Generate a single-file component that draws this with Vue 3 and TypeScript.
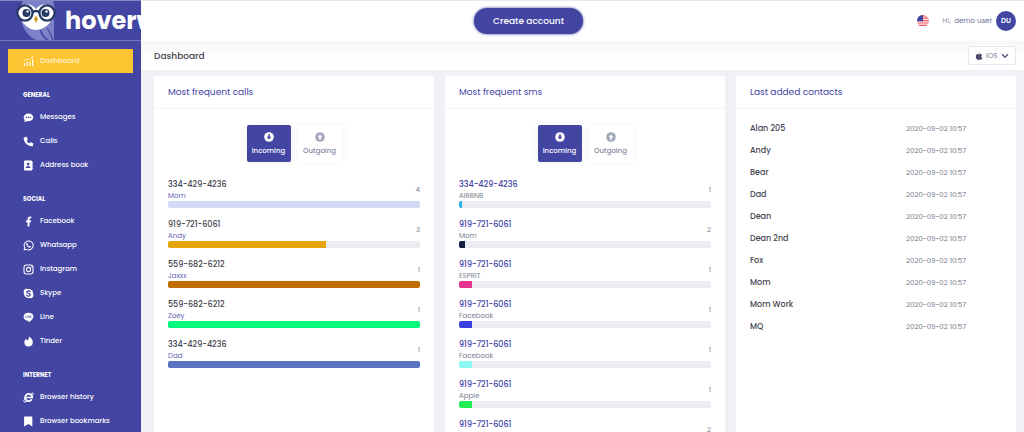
<script setup lang="ts">
import { ref } from 'vue'

interface NavItem { label: string; icon: string }
interface NavGroup { title: string; items: NavItem[] }
interface Entry { phone: string; name: string; count: number; share: number; color: string }
interface Panel { id: string; title: string; entries: Entry[] }

const groups: NavGroup[] = [
  {
    title: 'GENERAL',
    items: [
      { label: 'Messages', icon: 'messages' },
      { label: 'Calls', icon: 'calls' },
      { label: 'Address book', icon: 'address' },
    ],
  },
  {
    title: 'SOCIAL',
    items: [
      { label: 'Facebook', icon: 'facebook' },
      { label: 'Whatsapp', icon: 'whatsapp' },
      { label: 'Instagram', icon: 'instagram' },
      { label: 'Skype', icon: 'skype' },
      { label: 'Line', icon: 'line' },
      { label: 'Tinder', icon: 'tinder' },
    ],
  },
  {
    title: 'INTERNET',
    items: [
      { label: 'Browser history', icon: 'history' },
      { label: 'Browser bookmarks', icon: 'bookmark' },
    ],
  },
]

const panels: Panel[] = [
  {
    id: 'calls',
    title: 'Most frequent calls',
    entries: [
      { phone: '334-429-4236', name: 'Mom', count: 4, share: 100, color: '#d3daf5' },
      { phone: '919-721-6061', name: 'Andy', count: 3, share: 62.5, color: '#e5a50a' },
      { phone: '559-682-6212', name: 'Jaxxx', count: 1, share: 100, color: '#bf6c00' },
      { phone: '559-682-6212', name: 'Zoey', count: 1, share: 100, color: '#00f97c' },
      { phone: '334-429-4236', name: 'Dad', count: 1, share: 100, color: '#5b74c2' },
    ],
  },
  {
    id: 'sms',
    title: 'Most frequent sms',
    entries: [
      { phone: '334-429-4236', name: 'AIRBNB', count: 1, share: 1.3, color: '#2fb0ee' },
      { phone: '919-721-6061', name: 'Mom', count: 2, share: 2.4, color: '#10203f' },
      { phone: '919-721-6061', name: 'ESPRIT', count: 1, share: 5, color: '#e6348f' },
      { phone: '919-721-6061', name: 'Facebook', count: 1, share: 5, color: '#3d40e0' },
      { phone: '919-721-6061', name: 'Facebook', count: 1, share: 5, color: '#8bfaf3' },
      { phone: '919-721-6061', name: 'Apple', count: 1, share: 5, color: '#20ee57' },
      { phone: '919-721-6061', name: 'Apple', count: 2, share: 5, color: '#2fb0ee' },
    ],
  },
]

const contacts: string[] = ['Alan 205', 'Andy', 'Bear', 'Dad', 'Dean', 'Dean 2nd', 'Fox', 'Mom', 'Mom Work', 'MQ']
const added = '2020-09-02 10:57'

const direction = ref<Record<string, 'in' | 'out'>>({ calls: 'in', sms: 'in' })
const platform = ref('iOS')
</script>

<template>
  <div class="shell">
    <aside class="sidebar">
      <a class="brand" href="#" aria-label="hoverwatch">
        <svg class="owl" viewBox="0 0 44 41" aria-hidden="true">
          <path d="M7 0H37C39 8 39 14 38 20V41H22C12 37 6 28 5 18C4 11 5 5 7 0Z" fill="#7d82c8" />
          <path d="M24 29C25 33 28 38 33 41" fill="none" stroke="#4345a3" stroke-width="1.6" />
          <path d="M31 28C34 32 36 36 37 41" fill="none" stroke="#4345a3" stroke-width="1.2" />
          <path d="M3 8C10 2 17 5 20 9C23 5 30 2 37 8C40 19 30 30 20 30C11 30 1 19 3 8Z" fill="#fff" />
          <circle cx="9" cy="13" r="7.6" fill="#fff" stroke="#263a66" stroke-width="2.2" />
          <circle cx="31" cy="13" r="7.6" fill="#fff" stroke="#263a66" stroke-width="2.2" />
          <path d="M16 12.500Q20 9.500 24 12.500" fill="none" stroke="#263a66" stroke-width="2.400" />
          <circle cx="10.500" cy="13" r="4" fill="#263a66" />
          <circle cx="29.500" cy="13" r="4" fill="#263a66" />
          <circle cx="11.500" cy="11.500" r="1.200" fill="#fff" />
          <circle cx="30.500" cy="11.500" r="1.200" fill="#fff" />
          <path d="M20 15.500L22 19L20 23L18 19Z" fill="#cf9e25" />
        </svg>
        <span class="wordmark">hoverwatch</span>
      </a>
      <nav class="nav" aria-label="Main">
        <a class="item active" href="#">
          <svg class="icon" viewBox="0 0 12 12" fill="none" stroke="#fff" aria-hidden="true">
            <path d="M1.500 11V8M4.500 11V6.500M7.500 11V6M10.500 11V3.500" stroke-width="1.300" />
            <path d="M1 5.500L4 3.500L7 4L10.500 1" stroke-width=".8" />
            <circle cx="10.500" cy="1.300" r=".6" stroke-width=".6" />
          </svg>
          Dashboard
        </a>
        <section v-for="group in groups" :key="group.title">
          <h2 class="group">{{ group.title }}</h2>
          <a v-for="item in group.items" :key="item.label" class="item" href="#">
            <svg class="icon" viewBox="0 0 12 12" fill="#fff" aria-hidden="true">
              <template v-if="item.icon === 'messages'">
                <path d="M6 1.500C9 1.500 11.300 3.400 11.300 5.800S9 10 6 10C5.300 10 4.600 9.900 4 9.700C3.300 10.200 2.200 10.700 1 10.700C1.600 10 1.900 9.200 2 8.600C1.200 7.900 .7 6.900 .7 5.800C.7 3.400 3 1.500 6 1.500Z" />
                <path d="M2.800 5.800H9.200" fill="none" stroke="#4345a3" stroke-width="1.300" stroke-dasharray="1.500 .8" />
              </template>
              <path v-else-if="item.icon === 'calls'" d="M1.200 1.500L3.400 .8Q3.900 .7 4.100 1.200L5.200 3.600Q5.300 4 5 4.300L3.900 5.200Q4.900 7.200 6.900 8.200L7.800 7Q8.100 6.700 8.500 6.900L10.900 8Q11.300 8.200 11.200 8.600L10.700 10.800Q10.600 11.300 10 11.300C4.900 11.300 .7 7.100 .7 2Q.7 1.600 1.200 1.500Z" />
              <template v-else-if="item.icon === 'address'">
                <path d="M2.200 .5H9Q10 .5 10 1.500V10.500Q10 11.500 9 11.500H2.200Q1.200 11.500 1.200 10.500V1.500Q1.200 .5 2.200 .5ZM10.300 2H11V4H10.300ZM10.300 5H11V7H10.300ZM10.300 8H11V10H10.300Z" />
                <circle cx="5.600" cy="4.400" r="1.500" fill="#4345a3" />
                <path d="M2.900 8.700Q3 6.500 5.600 6.500T8.300 8.700Z" fill="#4345a3" />
              </template>
              <path v-else-if="item.icon === 'facebook'" d="M5 11.500V6.800H3.200V4.800H5V3.500C5 1.700 6 .6 7.700 .6L9.100 .7V2.400H8.100C7.300 2.400 7.100 2.900 7.100 3.500V4.800H9L8.700 6.800H7.100V11.500Z" />
              <template v-else-if="item.icon === 'whatsapp'">
                <path d="M1.200 10.900L1.900 8.300A4.900 4.900 0 1 1 3.800 10.200Z" fill="none" stroke="#fff" stroke-width="1.100" stroke-linejoin="round" />
                <path d="M3.900 3.500L4.800 3.300L5.400 4.700L4.900 5.400Q5.500 6.500 6.700 7L7.300 6.300L8.700 7L8.500 8Q7.700 8.800 6.500 8.300Q4.300 7.400 3.600 5.300Q3.300 4.200 3.900 3.500Z" />
              </template>
              <template v-else-if="item.icon === 'instagram'">
                <rect x="1.100" y="1.100" width="9.800" height="9.800" rx="2.700" fill="none" stroke="#fff" stroke-width="1.200" />
                <circle cx="6" cy="6" r="2.300" fill="none" stroke="#fff" stroke-width="1.200" />
                <circle cx="8.900" cy="3.100" r=".7" />
              </template>
              <template v-else-if="item.icon === 'skype'">
                <circle cx="4" cy="4" r="3.300" /><circle cx="8" cy="8" r="3.300" /><circle cx="6" cy="6" r="5" />
                <path d="M8 4.200Q7.400 3.100 5.900 3.100Q4.100 3.200 4.100 4.500Q4.200 5.500 6 5.900T7.900 7.500Q7.800 8.900 6 8.900Q4.400 8.900 3.900 7.600" fill="none" stroke="#4345a3" stroke-width="1.200" stroke-linecap="round" />
              </template>
              <template v-else-if="item.icon === 'line'">
                <path d="M6 .9C9 .9 11.400 2.700 11.400 5.200C11.400 7.600 8.600 9.600 6 11.500C6.100 10.700 6.200 9.800 5.600 9.600C2.700 9.400 .6 7.600 .6 5.200C.6 2.700 3 .9 6 .9Z" />
                <path d="M2.700 4V6.300H4M4.800 4V6.400M5.700 6.400V4.200L7.100 6.200V4M9.200 4.200H8V6.200H9.200M8 5.200H9.100" fill="none" stroke="#4345a3" stroke-width=".5" />
              </template>
              <path v-else-if="item.icon === 'tinder'" d="M6.300 .6C9 2 10.800 4.300 10.700 7C10.600 9.700 8.600 11.400 6.100 11.400C3.400 11.400 1.500 9.600 1.500 7C1.500 5.200 2.300 3.700 3.700 2.900C3.600 3.900 3.900 4.600 4.500 4.900C6 4 6.700 2.500 6.300 .6Z" />
              <template v-else-if="item.icon === 'history'">
                <path d="M9.600 7.900A3.900 3.900 0 1 1 10.100 6H3.600" fill="none" stroke="#fff" stroke-width="1.900" />
                <path d="M9 1.600Q11.500 .3 11.200 2.300Q11 3 10.600 3.700M2.200 6.500Q.2 9.900 1.200 10.900Q2.200 11.400 4.500 10" fill="none" stroke="#fff" stroke-width="1" />
              </template>
              <path v-else d="M1.800 .5H9.600Q10.200 .5 10.200 1.100V11.500L6 8.800L1.200 11.500V1.100Q1.200 .5 1.800 .5Z" />
            </svg>
            {{ item.label }}
          </a>
        </section>
      </nav>
    </aside>

    <div class="main">
      <header class="topbar">
        <button class="create" type="button">Create account</button>
        <div class="account">
          <button class="flag" type="button" aria-label="English">
            <svg viewBox="0 0 12 12" aria-hidden="true">
              <defs><clipPath id="round"><circle cx="6" cy="6" r="6" /></clipPath></defs>
              <g clip-path="url(#round)">
                <rect width="12" height="12" fill="#fbe3e5" />
                <path d="M0 .8H12M0 3.200H12M0 5.600H12M0 8H12M0 10.400H12" stroke="#f0626c" stroke-width="1.200" />
                <rect width="6" height="6.200" fill="#3f419c" />
              </g>
            </svg>
          </button>
          <button class="user" type="button">
            <span class="hi">Hi,</span>
            <span class="who">demo user</span>
            <span class="avatar">DU</span>
          </button>
        </div>
      </header>

      <div class="subheader">
        <h1>Dashboard</h1>
        <label class="platform">
          <svg class="apple" viewBox="0 0 10 10" aria-hidden="true">
            <path d="M6.600 .3Q6.600 2 5 2.400Q5 .9 6.600 .3ZM8.900 3.600Q7.700 4.300 7.800 5.700Q7.900 7.100 9.200 7.600Q8.300 9.800 7.200 9.800Q6.600 9.800 6.100 9.600Q5.300 9.300 4.600 9.600Q3.900 9.900 3.500 9.900C2.400 9.800 1 7.700 1 5.600C1 3.700 2.200 2.600 3.400 2.600Q4 2.600 4.600 2.900Q5.100 3.100 5.700 2.800C6.800 2.400 8.100 2.500 8.900 3.600Z" fill="#4a4d68" />
          </svg>
          <select v-model="platform" aria-label="Platform">
            <option>iOS</option>
            <option>Android</option>
          </select>
          <svg class="chevron" viewBox="0 0 8 6" aria-hidden="true">
            <path d="M1 1.300L4 4.300L7 1.300" fill="none" stroke="#5d6083" stroke-width="1.500" />
          </svg>
        </label>
      </div>

      <main class="content">
        <section v-for="panel in panels" :key="panel.id" class="card">
          <h2 class="title">{{ panel.title }}</h2>
          <div class="toggle">
            <button
              type="button"
              :class="{ on: direction[panel.id] === 'in' }"
              :aria-pressed="direction[panel.id] === 'in'"
              @click="direction[panel.id] = 'in'"
            >
              <svg viewBox="0 0 10 10" aria-hidden="true">
                <circle cx="5" cy="5" r="4.800" class="disc" />
                <path d="M4.200 2.200H5.800V4.800H7.400L5 7.500L2.600 4.800H4.200Z" class="arrow" />
              </svg>
              Incoming
            </button>
            <button
              type="button"
              :class="{ on: direction[panel.id] === 'out' }"
              :aria-pressed="direction[panel.id] === 'out'"
              @click="direction[panel.id] = 'out'"
            >
              <svg viewBox="0 0 10 10" aria-hidden="true">
                <circle cx="5" cy="5" r="4.800" class="disc" />
                <path d="M4.200 7.800H5.800V5.200H7.400L5 2.500L2.600 5.200H4.200Z" class="arrow" />
              </svg>
              Outgoing
            </button>
          </div>
          <ul class="entries" :class="panel.id">
            <li v-for="(entry, i) in panel.entries" :key="i">
              <div class="line">
                <div>
                  <a class="phone" href="#">{{ entry.phone }}</a>
                  <span class="name">{{ entry.name }}</span>
                </div>
                <span class="count">{{ entry.count }}</span>
              </div>
              <div class="track">
                <div class="fill" :style="{ width: entry.share + '%', background: entry.color }"></div>
              </div>
            </li>
          </ul>
        </section>

        <section class="card">
          <h2 class="title">Last added contacts</h2>
          <table class="contacts">
            <tbody>
              <tr v-for="contact in contacts" :key="contact">
                <th scope="row">{{ contact }}</th>
                <td>{{ added }}</td>
              </tr>
            </tbody>
          </table>
        </section>
      </main>
    </div>
  </div>
</template>

<style>
body {
  margin: 0;
  background: #f0f1f7;
}
</style>

<style scoped>
.shell {
  display: grid;
  grid-template-columns: 141px minmax(0, 1fr);
  height: 100vh;
  overflow: hidden;
  font-family: Poppins, Inter, "Open Sans", sans-serif;
  font-size: 7px;
  line-height: 12px;
  color: #45464f;
}
.shell * {
  box-sizing: border-box;
}
h1,
h2,
ul {
  margin: 0;
  padding: 0;
  list-style: none;
}
a {
  color: inherit;
  text-decoration: none;
}
button,
select {
  border: 0;
  margin: 0;
  padding: 0;
  background: none;
  font: inherit;
  color: inherit;
  cursor: pointer;
}

.sidebar {
  background: #4345a3;
  color: #fff;
  overflow: hidden;
}
.brand {
  display: flex;
  align-items: center;
  gap: 5px;
  height: 41px;
  padding-left: 16px;
  border-top: 1px solid #8486c4;
  border-bottom: 1px solid #7477bd;
  overflow: hidden;
}
.owl {
  flex: none;
  width: 44px;
  height: 41px;
}
.wordmark {
  font-size: 24px;
  font-weight: 700;
  line-height: 40px;
}
.nav {
  padding: 8px;
}
.item {
  display: flex;
  align-items: center;
  gap: 6px;
  height: 24px;
  padding-left: 15px;
  font-weight: 500;
  white-space: nowrap;
}
.active {
  background: #fdc432;
  color: #fff4d2;
}
.icon {
  flex: none;
  width: 11px;
  height: 11px;
}
.group {
  height: 32px;
  padding: 16px 15px 0;
  font-size: 6px;
  font-weight: 700;
}

.main {
  display: flex;
  flex-direction: column;
  min-width: 0;
  overflow: hidden;
}
.topbar {
  display: grid;
  grid-template-columns: 10fr auto 13fr;
  align-items: center;
  flex: none;
  height: 41px;
  padding-right: 8px;
  background: #fff;
  border-top: 1px solid #e9e9ed;
}
.create {
  grid-column: 2;
  height: 26px;
  padding: 0 19px;
  border-radius: 13px;
  background: #4345a3;
  box-shadow: 0 0 3px #4345a3;
  color: #fff;
  font-size: 9px;
  font-weight: 500;
}
.account {
  display: flex;
  align-items: center;
  justify-content: flex-end;
  gap: 13px;
}
.flag {
  width: 12px;
  height: 12px;
}
.flag svg {
  display: block;
}
.user {
  display: flex;
  align-items: center;
  gap: 4px;
  color: #6b6e90;
}
.hi {
  color: #9496b0;
}
.avatar {
  width: 20px;
  height: 20px;
  border-radius: 50%;
  background: #4345a3;
  color: #fff;
  font-weight: 600;
  line-height: 20px;
}
.subheader {
  display: flex;
  align-items: center;
  justify-content: space-between;
  flex: none;
  height: 29px;
  padding: 0 8px 0 13px;
  background: linear-gradient(#f7f7f9, #fff 70%);
}
h1 {
  font-size: 9px;
  font-weight: 500;
}
.platform {
  display: flex;
  align-items: center;
  gap: 3px;
  height: 19px;
  padding: 0 6px;
  border: 1px solid #e6e7f0;
  border-radius: 2px;
  background: #fff;
  color: #74768f;
}
.platform select {
  appearance: none;
  width: 12px;
  height: 12px;
}
.apple {
  width: 8px;
  height: 8px;
}
.chevron {
  width: 8px;
  height: 6px;
}

.content {
  display: grid;
  grid-template-columns: repeat(3, minmax(0, 1fr));
  gap: 11px;
  padding: 6px 8px 0 13px;
  flex: 1;
}
.card {
  background: #fff;
  border-radius: 2px;
  min-width: 0;
}
.title {
  height: 33px;
  padding: 10px 14px 0;
  border-bottom: 1px solid #f3f3f8;
  color: #4345a3;
  font-size: 9px;
  font-weight: 400;
}
.toggle {
  display: flex;
  justify-content: center;
  gap: 7px;
  padding: 16px 0;
}
.toggle button {
  display: flex;
  flex-direction: column;
  align-items: center;
  justify-content: center;
  gap: 3px;
  width: 44px;
  height: 37px;
  padding-top: 1px;
  border-radius: 2px;
  color: #85889c;
  font-weight: 500;
  box-shadow: 0 0 6px rgba(69, 65, 120, 0.08);
}
.toggle svg {
  width: 10px;
  height: 10px;
}
.disc {
  fill: #a3a8bb;
}
.arrow {
  fill: #fff;
}
.toggle .on {
  background: #4345a3;
  color: #fff;
}
.on .disc {
  fill: #fff;
}
.on .arrow {
  fill: #4345a3;
}
.entries {
  padding: 0 14px;
}
.entries li {
  height: 40px;
}
.line {
  display: flex;
  align-items: center;
  justify-content: space-between;
  height: 23px;
}
.phone,
.name {
  display: block;
  line-height: 11px;
}
.phone {
  font-size: 8px;
  font-weight: 500;
}
.name {
  color: #5f61b2;
}
.sms .phone {
  color: #4345a3;
}
.sms .name,
.count {
  color: #7b7e90;
}
.track {
  height: 7px;
  border-radius: 2px;
  background: #ebecf2;
  overflow: hidden;
}
.fill {
  height: 100%;
}
.contacts {
  width: 100%;
  margin-top: 9px;
  border-collapse: collapse;
}
.contacts th,
.contacts td {
  height: 22px;
  padding: 0 0 0 14px;
  text-align: left;
}
.contacts th {
  width: 156px;
  font-size: 8px;
  font-weight: 500;
}
.contacts td {
  color: #737688;
}
</style>
